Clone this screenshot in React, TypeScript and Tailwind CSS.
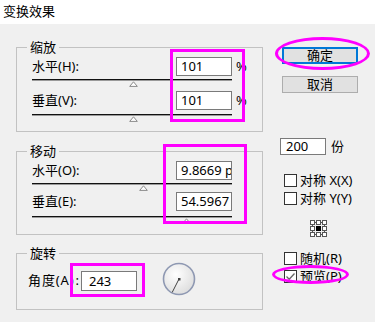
import React from 'react';

const font = { fontFamily: '"Noto Sans", "Noto Sans CJK SC", sans-serif' };

function Thumb({ left }: { left: number }) {
  return (
    <svg className="absolute top-0" style={{ left }} width="9" height="6" viewBox="0 0 9 6">
      <path d="M4.5 0.8 L8.3 5.4 L0.7 5.4 Z" fill="#ffffff" stroke="#8a8a8a" strokeWidth="1" />
    </svg>
  );
}

function SliderRow({ label, value, unit, thumb, lineGap, top }: {
  label: string; value: string; unit?: string; thumb: number; lineGap: number; top: number;
}) {
  return (
    <div style={{ marginTop: top }}>
      <div className="flex items-center h-[19px]">
        <span className="w-[144px] whitespace-nowrap">{label}</span>
        <div className="w-[56px] h-[19px] border border-[#7a7a7a] bg-white pl-[4px] leading-[17px] overflow-hidden whitespace-nowrap">
          {value}
        </div>
        {unit && <span className="ml-[4px]">{unit}</span>}
      </div>
      <div className="w-[200px] h-[2px] border-t border-[#111] border-b border-b-[#9a9a9a]" style={{ marginTop: lineGap }} />
      <div className="relative w-[200px] h-[6px]">
        <Thumb left={thumb} />
      </div>
    </div>
  );
}

function Group({ title, className, children }: { title: string; className: string; children: React.ReactNode }) {
  return (
    <div className={`relative border border-[#c2c2c2] ${className}`}>
      <span className="absolute left-[10px] top-[-9px] px-[3px] bg-[#f0f0f0] leading-[16px]">{title}</span>
      {children}
    </div>
  );
}

function Check({ label, checked, top }: { label: string; checked?: boolean; top: number }) {
  return (
    <div className="flex items-center ml-[21px] h-[13px]" style={{ marginTop: top }}>
      <div className="w-[13px] h-[13px] border border-[#333] bg-white flex items-center justify-center">
        {checked && (
          <svg width="11" height="11" viewBox="0 0 11 11">
            <path d="M1.5 5.5 L4.2 8.2 L9.5 2.5" fill="none" stroke="#666" strokeWidth="1.3" />
          </svg>
        )}
      </div>
      <span className="ml-[3px] whitespace-nowrap leading-[13px]">{label}</span>
    </div>
  );
}

function GridIcon() {
  const pos = [1.5, 7.5, 13.5];
  return (
    <svg width="20" height="20" viewBox="0 0 20 20">
      <path d="M5.5 3.5 H7.5 M11.5 3.5 H13.5 M5.5 15.5 H7.5 M11.5 15.5 H13.5 M3.5 5.5 V7.5 M3.5 11.5 V13.5 M15.5 5.5 V7.5 M15.5 11.5 V13.5" stroke="#555" strokeWidth="1" />
      {pos.map((y) =>
        pos.map((x) => {
          const center = x === 7.5 && y === 7.5;
          return (
            <rect key={`${x}-${y}`} x={x} y={y} width="4" height="4"
              fill={center ? '#000' : '#fff'} stroke={center ? '#000' : '#555'} strokeWidth="1" />
          );
        })
      )}
    </svg>
  );
}

function Dial({ angle }: { angle: number }) {
  const r = 15;
  const rad = (angle * Math.PI) / 180;
  const x2 = 17 + Math.cos(rad) * r;
  const y2 = 17 - Math.sin(rad) * r;
  return (
    <svg width="34" height="34" viewBox="0 0 34 34">
      <defs>
        <radialGradient id="dialFill" cx="40%" cy="35%" r="70%">
          <stop offset="0%" stopColor="#ffffff" />
          <stop offset="100%" stopColor="#dcdcdc" />
        </radialGradient>
      </defs>
      <circle cx="17" cy="17" r="15.5" fill="url(#dialFill)" stroke="#8e98b2" strokeWidth="1.6" />
      <line x1="17" y1="17" x2={x2} y2={y2} stroke="#444" strokeWidth="1" />
      <rect x="16" y="16" width="2.5" height="2.5" fill="#444" />
    </svg>
  );
}

export default function App() {
  return (
    <div className="relative w-[375px] h-[322px] overflow-hidden bg-[#f0f0f0] text-[13px] text-black" style={font}>
      <div className="h-[24px] bg-white pl-[3px] leading-[22px]">变换效果</div>

      <div className="flex pt-[23px] pl-[16px]">
        {/* 左侧 */}
        <div className="w-[247px] flex flex-col">
          <Group title="缩放" className="h-[85px] pt-[9px] pl-[15px]">
            <SliderRow label="水平(H):" value="101" unit="%" thumb={97} lineGap={3} top={0} />
            <SliderRow label="垂直(V):" value="101" unit="%" thumb={97} lineGap={4} top={4} />
          </Group>

          <Group title="移动" className="h-[84px] mt-[19px] pt-[9px] pl-[15px]">
            <SliderRow label="水平(O):" value="9.8669 px" thumb={107} lineGap={3} top={0} />
            <SliderRow label="垂直(E):" value="54.5967" thumb={150} lineGap={5} top={1} />
          </Group>

          <Group title="旋转" className="h-[57px] mt-[18px] pt-[17px] pl-[11px]">
            <div className="flex items-center h-[20px]">
              <span className="w-[53px] flex whitespace-nowrap">
                <span className="tracking-[0.9px]">角度(A)</span>
                <span className="ml-auto pr-[2px]">:</span>
              </span>
              <div className="w-[56px] h-[20px] border border-[#7a7a7a] bg-white pl-[7px] leading-[18px]">243</div>
              <div className="self-start mt-[6px] ml-[5px] w-[2px] h-[2px] bg-[#6d89c9]" />
              <div className="ml-[18px] mt-[-4px]">
                <Dial angle={243} />
              </div>
            </div>
          </Group>
        </div>

        {/* 右侧 */}
        <div className="flex flex-col">
          <button className="ml-[19px] w-[76px] h-[17px] border-2 border-[#0078d7] bg-[#e1e1e1] leading-[13px]">确定</button>
          <button className="ml-[19px] mt-[12px] w-[76px] h-[17px] border border-[#adadad] bg-[#e1e1e1] leading-[15px]">取消</button>

          <div className="flex items-center ml-[17px] mt-[44px]">
            <div className="w-[46px] h-[17px] border border-[#7a7a7a] bg-white pl-[5px] leading-[15px]">200</div>
            <span className="ml-[5px]">份</span>
          </div>

          <Check label="对称 X(X)" top={17} />
          <Check label="对称 Y(Y)" top={5} />

          <div className="ml-[46px] mt-[14px] w-[20px] h-[20px]">
            <GridIcon />
          </div>

          <Check label="随机(R)" top={13} />
          <Check label="预览(P)" checked top={5} />
        </div>
      </div>

      {/* 标注 */}
      <div className="absolute left-[170px] top-[49px] w-[75px] h-[73px] border-[3px] border-[#ff00ff]" />
      <div className="absolute left-[163px] top-[144px] w-[84px] h-[80px] border-[3px] border-[#ff00ff]" />
      <div className="absolute left-[70px] top-[263px] w-[75px] h-[34px] border-[3px] border-[#ff00ff]" />
      <div className="absolute left-[275px] top-[37px] w-[95px] h-[33px] border-[3px] border-[#ff00ff] rounded-[50%]" />
      <div className="absolute left-[272px] top-[265px] w-[77px] h-[19px] border-[3px] border-[#ff00ff] rounded-[50%]" />
    </div>
  );
}
